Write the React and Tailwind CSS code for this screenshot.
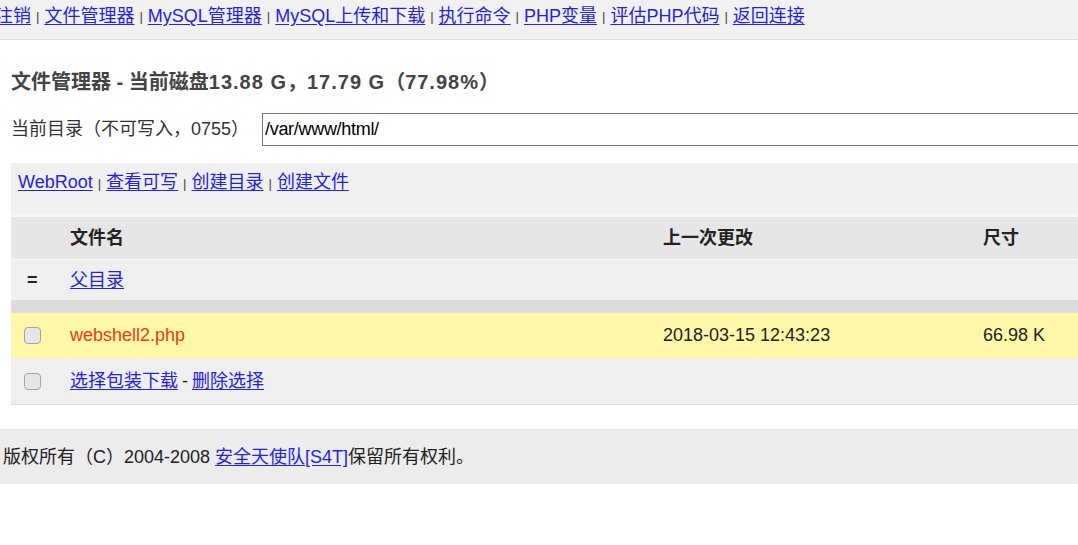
const navLinks = ['注销', '文件管理器', 'MySQL管理器', 'MySQL上传和下载', '执行命令', 'PHP变量', '评估PHP代码', '返回连接'];
const toolLinks = ['WebRoot', '查看可写', '创建目录', '创建文件'];

function Sep() {
    return <span className="mx-[5px] text-[13px] text-[#444]">|</span>;
}

function Box() {
    return <span className="block h-[17px] w-[17px] rounded-[4px] border border-[#a4a4a4] bg-[#e6e6e6]" />;
}

export default function App() {
    return (
        <div className="min-h-screen overflow-hidden bg-white text-[18px] text-[#333] [font-family:'Liberation_Sans','Noto_Sans_CJK_SC',sans-serif]">
            {/* top nav */}
            <div className="flex h-[40px] items-center border-b border-[#dedede] bg-[#f1f1f1] pb-[6px] whitespace-nowrap">
                <div className="-ml-[5px] flex items-center">
                    {navLinks.map((l, i) => (
                        <span key={l} className="flex items-center">
                            {i > 0 && <Sep />}
                            <a href="#" className="text-[#2323dc] underline underline-offset-2">{l}</a>
                        </span>
                    ))}
                </div>
            </div>

            <div className="ml-[11px] mr-[-30px]">
                <h2 className="mt-[27px] text-[20px] font-bold text-[#444]">
                    文件管理器 - 当前磁盘<span className="tracking-[1px]">13.88 G</span>，<span className="tracking-[1px]">17.79 G</span>（<span className="tracking-[1px]">77.98%</span>）
                </h2>

                <div className="mt-[16px] flex items-center">
                    <span className="w-[251px] shrink-0 whitespace-nowrap">当前目录（不可写入，0755）</span>
                    <input
                        className="h-[33px] flex-1 border border-[#777] px-[2px] text-[18px] text-black outline-none [font-family:'Liberation_Sans',sans-serif] tracking-[-0.3px]"
                        defaultValue="/var/www/html/"
                    />
                </div>

                <div className="mt-[17px] h-[52px] bg-[#f0f0f0] px-[7px] pt-[6px]">
                    {toolLinks.map((l, i) => (
                        <span key={l}>
                            {i > 0 && <Sep />}
                            <a href="#" className="text-[#2323dc] underline underline-offset-2">{l}</a>
                        </span>
                    ))}
                </div>

                <div className="border-b border-[#dcdcdc]">
                    <div className="grid h-[44px] grid-cols-[59px_593px_320px_1fr] items-center border-t-2 border-[#f7f7f7] bg-[#e6e6e6] font-bold text-[#222]">
                        <span />
                        <span>文件名</span>
                        <span>上一次更改</span>
                        <span>尺寸</span>
                    </div>
                    <div className="grid h-[41px] grid-cols-[59px_1fr] items-center border-t border-[#f7f7f7] bg-[#efefef]">
                        <span className="pl-[16px] font-bold text-[#222]">=</span>
                        <a href="#" className="text-[#2323dc] underline underline-offset-2">父目录</a>
                    </div>
                    <div className="h-[13px] bg-[#dcdcdc]" />
                    <div className="grid h-[46px] grid-cols-[59px_593px_320px_1fr] items-center border-b-2 border-[#f5f3c8] bg-[#fff8a8]">
                        <span className="pl-[13px]"><Box /></span>
                        <span className="text-[#ee3a1a]">webshell2.php</span>
                        <span className="text-[#222]">2018-03-15 12:43:23</span>
                        <span className="text-[#222]">66.98 K</span>
                    </div>
                    <div className="grid h-[45px] grid-cols-[59px_1fr] items-center bg-[#efefef]">
                        <span className="pl-[13px]"><Box /></span>
                        <span>
                            <a href="#" className="text-[#2323dc] underline underline-offset-2">选择包装下载</a>
                            <span className="mx-[4px] text-[#222]">-</span>
                            <a href="#" className="text-[#2323dc] underline underline-offset-2">删除选择</a>
                        </span>
                    </div>
                </div>
            </div>

            <div className="mt-[24px] flex h-[55px] items-center border-t border-[#e4e4e4] bg-[#ececec] pl-[3px] text-[#222]">
                <span>版权所有（C）2004-2008 </span>
                <a href="#" className="ml-[5px] text-[#2323dc] underline underline-offset-2">安全天使队[S4T]</a>
                <span>保留所有权利。</span>
            </div>
        </div>
    );
}
